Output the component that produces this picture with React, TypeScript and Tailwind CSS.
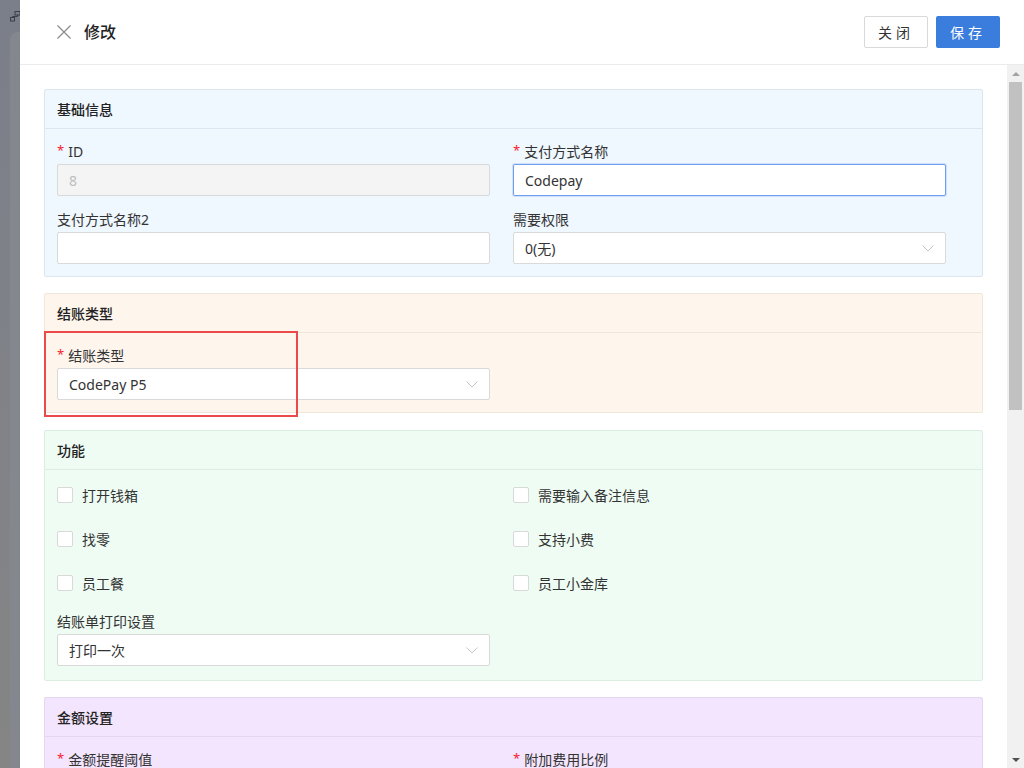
import React from 'react';

const font = { fontFamily: '"Noto Sans", "Noto Sans CJK SC", sans-serif' };

function Chevron() {
  return (
    <svg width="12" height="7" viewBox="0 0 12 7" fill="none">
      <path d="M0.5 0.5 L6 6 L11.5 0.5" stroke="#c4c4c4" strokeWidth="1" />
    </svg>
  );
}

function Label({ text, required }: { text: string; required?: boolean }) {
  return (
    <div className="mb-[2px] flex h-[22px] items-center text-[14px] text-[#333]">
      {required && <span className="mr-[4px] text-[13px] text-[#f5222d]">*</span>}
      {text}
    </div>
  );
}

function TextInput({ value, disabled, focused }: { value?: string; disabled?: boolean; focused?: boolean }) {
  let cls = 'border-[#d9d9d9] bg-white text-[#333]';
  if (disabled) cls = 'border-[#d9d9d9] bg-[#f4f4f4] text-[#bdbdbd]';
  if (focused) cls = 'border-[#6f9ff0] bg-white text-[#333] shadow-[0_0_0_1px_rgba(111,159,240,0.25)]';
  return (
    <div className={`flex h-[32px] items-center rounded-[2px] border px-[11px] text-[14px] ${cls}`}>
      {value}
    </div>
  );
}

function SelectBox({ value }: { value: string }) {
  return (
    <div className="flex h-[32px] items-center justify-between rounded-[2px] border border-[#d9d9d9] bg-white pl-[11px] pr-[11px] text-[14px] text-[#333]">
      <span>{value}</span>
      <Chevron />
    </div>
  );
}

function Checkbox({ text }: { text: string }) {
  return (
    <div className="flex h-[22px] items-center text-[14px] text-[#333]">
      <span className="mr-[9px] h-[16px] w-[16px] rounded-[2px] border border-[#d9d9d9] bg-white" />
      {text}
    </div>
  );
}

function Section({
  title,
  bg,
  border,
  className = '',
  children,
}: {
  title: string;
  bg: string;
  border: string;
  className?: string;
  children: React.ReactNode;
}) {
  return (
    <section className={`rounded-[2px] border ${bg} ${border} ${className}`}>
      <div className={`flex h-[39px] items-center border-b px-[12px] text-[14px] font-medium text-[#222] ${border}`}>
        {title}
      </div>
      {children}
    </section>
  );
}

export default function App() {
  return (
    <div className="flex h-[768px] w-[1024px] overflow-hidden" style={font}>
      {/* dimmed page behind the drawer */}
      <div className="relative w-[20px] shrink-0 overflow-hidden bg-gradient-to-b from-[#7b7f8a] to-[#858585]">
        <svg className="absolute left-[10px] top-[11px]" width="12" height="11" viewBox="0 0 12 11" fill="none">
          <rect x="5" y="0.5" width="5" height="3.5" stroke="#3b3f48" />
          <rect x="0.5" y="6.5" width="4" height="3.5" stroke="#3b3f48" />
          <path d="M7.5 4 V5.5 H2.5 V6.5" stroke="#3b3f48" />
        </svg>
        <div className="absolute left-[10px] top-[32px] h-[760px] w-[20px] rounded-tl-[8px] bg-[#84878d]" />
      </div>

      <div className="flex min-w-0 flex-1 flex-col bg-white">
        {/* header */}
        <header className="flex h-[65px] shrink-0 items-center justify-between border-b border-[#ebebeb] pl-[37px] pr-[24px]">
          <div className="flex items-center">
            <svg width="14" height="14" viewBox="0 0 14 14" fill="none">
              <path d="M0.5 0.5 L13.5 13.5 M13.5 0.5 L0.5 13.5" stroke="#8c8c8c" strokeWidth="1.3" />
            </svg>
            <span className="ml-[13px] text-[16px] font-medium text-[#222]">修改</span>
          </div>
          <div className="flex items-center gap-[8px]">
            <button className="h-[32px] w-[64px] rounded-[2px] border border-[#d9d9d9] bg-white text-[14px] tracking-[4px] text-[#333]">
              关闭
            </button>
            <button className="h-[32px] w-[64px] rounded-[2px] bg-[#3b7ddd] text-[14px] tracking-[4px] text-white">
              保存
            </button>
          </div>
        </header>

        {/* body */}
        <div className="flex min-h-0 flex-1">
          <div className="flex min-w-0 flex-1 flex-col gap-[16px] overflow-hidden px-[24px] pt-[24px]">
            <Section title="基础信息" bg="bg-[#eff7ff]" border="border-[#dbe6f1]">
              <div className="grid grid-cols-2 gap-x-[23px] gap-y-[12px] pb-[12px] pl-[12px] pr-[36px] pt-[11px]">
                <div>
                  <Label text="ID" required />
                  <TextInput value="8" disabled />
                </div>
                <div>
                  <Label text="支付方式名称" required />
                  <TextInput value="Codepay" focused />
                </div>
                <div>
                  <Label text="支付方式名称2" />
                  <TextInput />
                </div>
                <div>
                  <Label text="需要权限" />
                  <SelectBox value="0(无)" />
                </div>
              </div>
            </Section>

            <div className="relative">
              <Section title="结账类型" bg="bg-[#fef5ec]" border="border-[#f1e6da]">
                <div className="grid grid-cols-2 gap-x-[23px] pb-[12px] pl-[12px] pr-[36px] pt-[11px]">
                  <div>
                    <Label text="结账类型" required />
                    <SelectBox value="CodePay P5" />
                  </div>
                </div>
              </Section>
              <div className="absolute left-0 top-[38px] h-[86px] w-[254px] border-2 border-[#ea4a4a]" />
            </div>

            <Section title="功能" bg="bg-[#eefcf3]" border="border-[#dcede2]" className="mt-[1px]">
              <div className="pb-[14px] pl-[12px] pr-[36px] pt-[14px]">
                <div className="grid grid-cols-2 gap-x-[23px] gap-y-[22px]">
                  <Checkbox text="打开钱箱" />
                  <Checkbox text="需要输入备注信息" />
                  <Checkbox text="找零" />
                  <Checkbox text="支持小费" />
                  <Checkbox text="员工餐" />
                  <Checkbox text="员工小金库" />
                </div>
                <div className="mt-[16px] grid grid-cols-2 gap-x-[23px]">
                  <div>
                    <Label text="结账单打印设置" />
                    <SelectBox value="打印一次" />
                  </div>
                </div>
              </div>
            </Section>

            <Section title="金额设置" bg="bg-[#f3e5fd]" border="border-[#e5d7ef]">
              <div className="grid grid-cols-2 gap-x-[23px] pb-[12px] pl-[12px] pr-[36px] pt-[11px]">
                <div>
                  <Label text="金额提醒阈值" required />
                  <TextInput />
                </div>
                <div>
                  <Label text="附加费用比例" required />
                  <TextInput />
                </div>
              </div>
            </Section>
          </div>

          {/* scrollbar */}
          <div className="flex w-[17px] shrink-0 flex-col items-center bg-[#f1f1f1]">
            <div className="flex h-[17px] items-center justify-center">
              <div className="h-0 w-0 border-x-[4px] border-b-[4px] border-x-transparent border-b-[#a3a3a3]" />
            </div>
            <div className="h-[328px] w-[13px] bg-[#c1c1c1]" />
            <div className="flex-1" />
            <div className="flex h-[17px] items-center justify-center">
              <div className="h-0 w-0 border-x-[4px] border-t-[4px] border-x-transparent border-t-[#505050]" />
            </div>
          </div>
        </div>
      </div>
    </div>
  );
}
